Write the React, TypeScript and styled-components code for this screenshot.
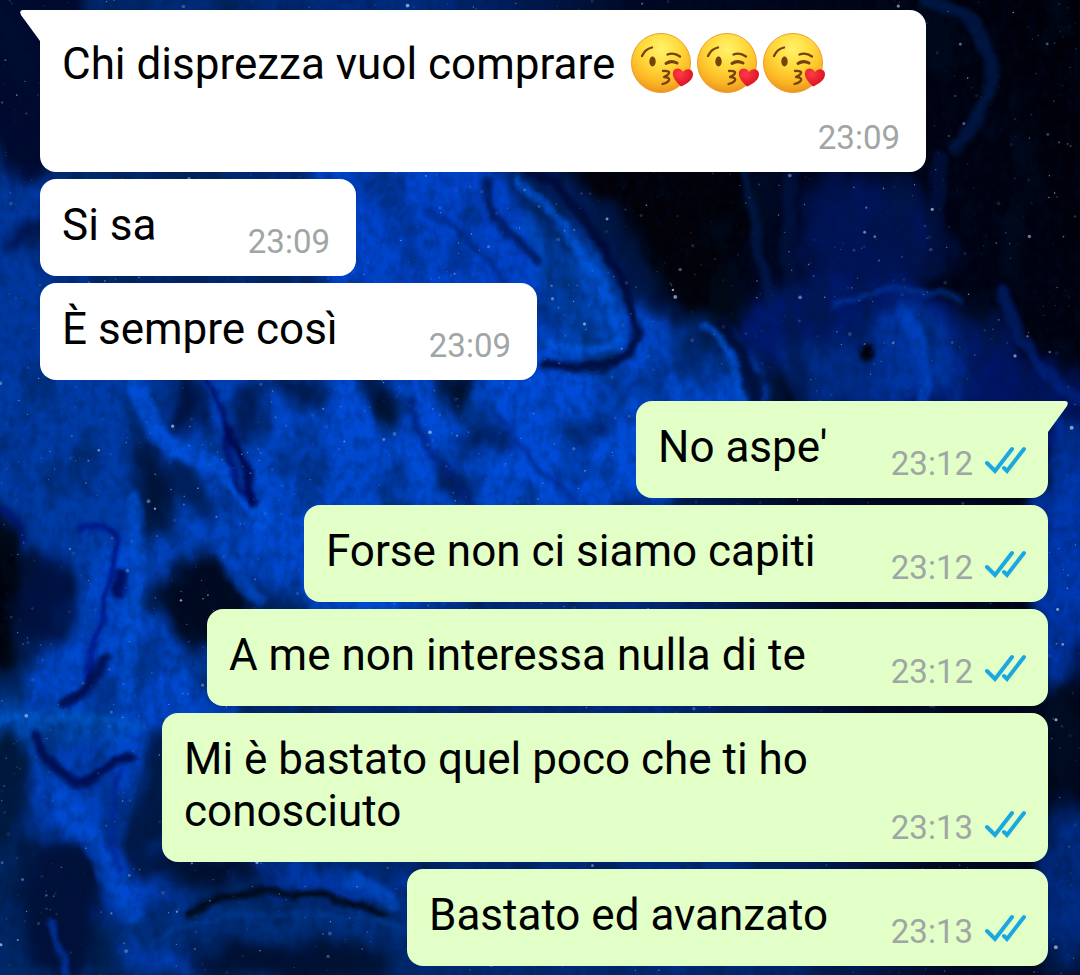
import React from "react";
import styled, { createGlobalStyle } from "styled-components";

const GlobalStyle = createGlobalStyle`
  *, *::before, *::after { box-sizing: border-box; }
  html { background: #00103c; }
  body { margin: 0; font-family: Roboto, "Noto Sans", sans-serif; color: #000; }
`;

const Wallpaper = styled.svg`
  position: fixed;
  inset: 0;
  width: 100%;
  height: 100%;
  z-index: -1;
`;

const Chat = styled.main`
  display: flex;
  flex-direction: column;
  gap: 21px;
  padding: 10px 32px 9px 40px;
`;

const Group = styled.section<{ $mine?: boolean }>`
  display: flex;
  flex-direction: column;
  align-items: ${(p) => (p.$mine ? "flex-end" : "flex-start")};
  gap: 7px;
`;

const Bubble = styled.article<{ $mine?: boolean; $width: number; $stacked?: boolean; $tail?: boolean }>`
  position: relative;
  display: flex;
  flex-direction: ${(p) => (p.$stacked ? "column" : "row")};
  justify-content: space-between;
  align-items: flex-end;
  width: ${(p) => p.$width}px;
  max-width: 100%;
  min-height: ${(p) => (p.$stacked ? 162 : 97)}px;
  padding: ${(p) => (p.$stacked ? 22 : 20)}px ${(p) => (p.$mine ? 22 : 26)}px 18px 22px;
  border-radius: 16px;
  border-top-left-radius: ${(p) => (p.$tail && !p.$mine ? 0 : 16)}px;
  border-top-right-radius: ${(p) => (p.$tail && p.$mine ? 0 : 16)}px;
  background: ${(p) => (p.$mine ? "#e1ffc7" : "#fff")};
`;

const Tail = styled.svg<{ $mine?: boolean }>`
  position: absolute;
  top: 0;
  ${(p) => (p.$mine ? "left: 100%; transform: scaleX(-1);" : "right: 100%;")}
  width: 20px;
  height: 32px;
  fill: ${(p) => (p.$mine ? "#e1ffc7" : "#fff")};
`;

const Text = styled.p<{ $stacked?: boolean }>`
  flex: 0 1 auto;
  align-self: ${(p) => (p.$stacked ? "stretch" : "flex-end")};
  margin: 0;
  padding-bottom: 7px;
  font-size: 44px;
  line-height: 52px;
`;

const Meta = styled.footer`
  display: flex;
  flex: none;
  gap: 11px;
  color: #a0a5a5;
  font-size: 33px;
  line-height: 32px;
`;

const Ticks = styled.svg`
  width: 42px;
  height: 32px;
  overflow: visible;
  fill: none;
  stroke: #1ba8e0;
  stroke-width: 4;
  stroke-linecap: round;
`;

const EmojiRun = styled.span`
  margin-left: 4px;
`;

const Emoji = styled.svg`
  width: 66px;
  height: 62px;
  vertical-align: -15px;
`;

function Kiss() {
  return (
    <Emoji viewBox="0 0 66 62" role="img" aria-label="😘">
      <defs>
        <radialGradient id="face" cx="50%" cy="26%" r="74%">
          <stop offset="0" stopColor="#fff36b" />
          <stop offset="0.45" stopColor="#ffd83a" />
          <stop offset="0.8" stopColor="#fbb423" />
          <stop offset="1" stopColor="#ea9420" />
        </radialGradient>
        <radialGradient id="heart" cx="35%" cy="30%" r="75%">
          <stop offset="0" stopColor="#ff3c46" />
          <stop offset="1" stopColor="#d80d20" />
        </radialGradient>
      </defs>
      <circle cx="31" cy="31" r="29.500" fill="url(#face)" stroke="#e9a02c" />
      <g fill="none" stroke="#75420d" strokeWidth="2.3" strokeLinecap="round" strokeLinejoin="round">
        <path d="M12 24 Q15 17 22 15.500" />
        <path d="M37.500 22.500 Q44 20 50 24.500" />
        <path d="M36 31.500 Q41 28 47 31" strokeWidth="3" />
        <path d="M33 39 Q41 38.500 38.500 42 Q37 44 34 45 Q41 45.500 38.500 49 Q37 51 32.500 52" />
      </g>
      <ellipse cx="22.500" cy="29.500" rx="3.2" ry="5" fill="#75420d" />
      <path d="M51 54.500 C46 50 42 45 43 40 C45 35 51 36 53 40 C56 35.500 63 37 63 42 C63 48 57 52 51 54.500Z" fill="url(#heart)" />
    </Emoji>
  );
}

type Blob = [number, number, number, number, number, string, number];

const blobs: Blob[] = [
  [20, 290, 60, 130, 0, "#0038a0", 1],
  [120, 460, 200, 110, 0, "#003ca8", 1],
  [330, 490, 190, 120, 20, "#0048cc", 1],
  [420, 240, 130, 100, 30, "#0044cc", 1],
  [520, 420, 190, 90, 10, "#004cd8", 1],
  [575, 290, 36, 90, -25, "#0048bc", 1],
  [690, 375, 90, 48, 35, "#0048cc", 1],
  [870, 235, 80, 60, 10, "#001458", 1],
  [880, 350, 150, 66, 10, "#00196c", 1],
  [910, 360, 50, 50, 10, "#0034a0", 1],
  [830, 370, 50, 36, 0, "#002c88", 1],
  [1040, 400, 60, 50, 30, "#001464", 1],
  [1066, 570, 30, 150, 0, "#0038b0", 1],
  [1066, 740, 24, 60, 0, "#000c20", 1],
  [1066, 890, 30, 80, 0, "#002c84", 1],
  [130, 690, 100, 150, 12, "#0048cc", 1],
  [30, 724, 90, 24, 0, "#004cb8", 1],
  [80, 805, 60, 60, -20, "#0044c4", 1],
  [146, 900, 50, 80, -25, "#0040bc", 1],
  [330, 880, 100, 18, 10, "#0038a8", 1],
  [250, 930, 180, 20, 0, "#003080", 1],
  [650, 160, 130, 60, 35, "#020208", 1],
  [685, 240, 46, 90, -30, "#020208", 1],
  [700, 345, 20, 30, -20, "#002058", 0.8],
  [30, 60, 60, 110, 0, "#000a30", 1],
  [24, 236, 22, 9, -8, "#000a38", 0.9],
  [185, 408, 18, 30, -15, "#000c30", 0.9],
  [246, 412, 14, 34, -15, "#001038", 0.8],
  [292, 392, 24, 16, 0, "#001848", 0.9],
  [384, 396, 16, 26, -20, "#00081c", 0.9],
  [456, 388, 20, 22, -30, "#00081c", 0.9],
  [484, 434, 22, 12, 0, "#001c54", 0.9],
  [600, 430, 20, 10, 0, "#001c54", 0.9],
  [458, 476, 18, 24, 30, "#00143c", 0.8],
  [155, 490, 16, 66, -8, "#00102c", 0.9],
  [190, 490, 24, 30, -35, "#001844", 0.8],
  [555, 220, 12, 50, -18, "#002460", 0.8],
  [205, 605, 52, 44, 20, "#000a20", 1],
  [2, 590, 24, 86, 0, "#00040c", 1],
  [46, 600, 24, 52, 0, "#000c38", 0.8],
  [6, 790, 24, 60, 0, "#00183c", 0.9],
  [58, 905, 42, 70, -10, "#001036", 0.9],
  [152, 800, 20, 70, 8, "#001438", 0.9],
  [205, 872, 60, 16, 5, "#000c28", 0.9],
  [290, 958, 110, 20, 6, "#000e2c", 0.9],
];

const strokes: [string, string, number, number][] = [
  ["M528 170 Q570 190 598 240 Q636 300 637 340 Q630 372 544 366", "#000a38", 9, 0.9],
  ["M518 180 Q562 220 586 260 Q618 310 620 342 Q600 354 545 348", "#0058e0", 9, 0.8],
  ["M484 180 Q484 224 540 260", "#001858", 10, 0.8],
  ["M430 212 Q480 240 500 280", "#002880", 7, 0.7],
  ["M720 325 Q752 360 758 402", "#000c34", 12, 0.9],
  ["M705 325 Q738 360 744 402", "#0052d8", 9, 0.8],
  ["M745 170 Q755 230 770 300", "#00205c", 10, 0.6],
  ["M790 170 Q784 260 800 400", "#00184c", 14, 0.6],
  ["M835 305 Q890 278 960 300", "#0038a0", 6, 0.7],
  ["M905 310 Q930 350 920 405", "#0044c4", 14, 0.8],
  ["M867 348 L867 354", "#00020c", 14, 1],
  ["M925 0 Q990 14 994 76 Q984 120 955 148", "#001a4c", 12, 0.8],
  ["M940 160 L934 270", "#001040", 16, 0.8],
  ["M1000 290 Q1030 370 1080 400", "#00288c", 12, 0.6],
  ["M137 375 Q140 440 190 455 Q240 470 262 520", "#0054e4", 18, 0.8],
  ["M208 382 Q224 400 226 438 Q235 490 256 500", "#00106c", 6, 0.9],
  ["M228 430 Q246 460 254 500", "#000a50", 8, 1],
  ["M408 400 Q436 470 480 512", "#002080", 6, 0.8],
  ["M500 420 Q540 480 590 510", "#00309c", 6, 0.8],
  ["M134 500 Q140 580 124 700", "#0052dc", 16, 0.7],
  ["M80 530 Q112 520 118 540 Q110 590 92 650 Q90 690 70 706", "#00188c", 6, 1],
  ["M122 575 L120 590", "#000a58", 12, 0.9],
  ["M104 660 Q88 692 64 702", "#001050", 11, 0.9],
  ["M0 720 Q60 712 140 728", "#0058cc", 8, 0.7],
  ["M36 735 Q54 780 86 784 Q110 766 132 756", "#001058", 10, 1],
  ["M60 800 Q100 850 130 910", "#0050dc", 22, 0.6],
  ["M125 770 Q100 830 120 870", "#00249c", 5, 0.8],
  ["M190 912 Q230 884 320 896 Q360 902 380 914", "#000814", 8, 0.9],
  ["M145 950 Q190 912 270 912 Q350 914 410 930", "#003c98", 6, 0.6],
  ["M350 880 Q380 888 392 902", "#004cc8", 16, 0.8],
  ["M48 920 Q60 950 68 975", "#0038b0", 8, 0.8],
  ["M220 520 Q226 570 260 600", "#004cd0", 14, 0.7],
  ["M0 508 Q16 514 22 540", "#001474", 6, 0.8],
];

function makeStars() {
  let seed = 41;
  const next = () => {
    seed = (seed * 16807) % 2147483647;
    return seed / 2147483647;
  };
  return Array.from({ length: 2600 }, () => ({
    x: next() * 1080,
    y: next() * 975,
    r: 0.6 + next() ** 5 * 1.4,
    o: 0.1 + next() ** 3 * 0.75,
  }));
}

const stars = makeStars();

function Background() {
  return (
    <Wallpaper viewBox="0 0 1080 975" preserveAspectRatio="xMidYMid slice" aria-hidden="true">
      <defs>
        <linearGradient id="base" x1="0" y1="0.3" x2="1" y2="0">
          <stop offset="0" stopColor="#002868" />
          <stop offset="0.45" stopColor="#002c80" />
          <stop offset="0.62" stopColor="#000824" />
          <stop offset="1" stopColor="#000006" />
        </linearGradient>
        <filter id="flow" x="-10%" y="-10%" width="120%" height="120%" colorInterpolationFilters="sRGB">
          <feGaussianBlur stdDeviation="8" result="soft" />
          <feTurbulence type="fractalNoise" baseFrequency="0.02 0.012" numOctaves="3" seed="7" result="noise" />
          <feDisplacementMap in="soft" in2="noise" scale="50" xChannelSelector="R" yChannelSelector="G" />
        </filter>
        <filter id="ink" x="-10%" y="-10%" width="120%" height="120%" colorInterpolationFilters="sRGB">
          <feGaussianBlur stdDeviation="2" result="soft" />
          <feTurbulence type="fractalNoise" baseFrequency="0.03" numOctaves="3" seed="3" result="noise" />
          <feDisplacementMap in="soft" in2="noise" scale="14" xChannelSelector="R" yChannelSelector="G" />
        </filter>
        <filter id="mottle" x="0" y="0" width="100%" height="100%" colorInterpolationFilters="sRGB">
          <feTurbulence type="fractalNoise" baseFrequency="0.024 0.014" numOctaves="4" seed="12" />
          <feColorMatrix values="0 0 0 0 0  0 0 0 0 0.09  0 0 0 0 0.2  4 0 0 0 -1.9" />
        </filter>
        <filter id="grain" x="0" y="0" width="100%" height="100%" colorInterpolationFilters="sRGB">
          <feTurbulence type="fractalNoise" baseFrequency="0.11 0.08" numOctaves="3" seed="5" />
          <feColorMatrix values="0 0 0 0 0  0 0 0 0 0.08  0 0 0 0 0.2  0 2 0 0 -0.8" />
        </filter>
      </defs>
      <rect width="1080" height="975" fill="url(#base)" />
      <g filter="url(#flow)">
        {blobs.map(([x, y, rx, ry, a, fill, o], i) => (
          <ellipse key={i} cx={x} cy={y} rx={rx} ry={ry} fill={fill} opacity={o} transform={`rotate(${a} ${x} ${y})`} />
        ))}
      </g>
      <rect width="1080" height="975" filter="url(#mottle)" opacity="0.35" />
      <g filter="url(#ink)" fill="none" strokeLinecap="round">
        {strokes.map(([d, stroke, w, o], i) => (
          <path key={i} d={d} stroke={stroke} strokeWidth={w} opacity={o} />
        ))}
      </g>
      <rect width="1080" height="975" filter="url(#grain)" opacity="0.3" />
      <g fill="#a9bfdc">
        {stars.map((s, i) => (
          <circle key={i} cx={s.x} cy={s.y} r={s.r} opacity={s.o} />
        ))}
      </g>
    </Wallpaper>
  );
}

type MessageProps = {
  time: string;
  width: number;
  mine?: boolean;
  tail?: boolean;
  stacked?: boolean;
  children: React.ReactNode;
};

function Message({ time, width, mine, tail, stacked, children }: MessageProps) {
  return (
    <Bubble $mine={mine} $width={width} $stacked={stacked} $tail={tail}>
      {tail && (
        <Tail $mine={mine} viewBox="0 0 20 32" aria-hidden="true">
          <path d="M20 0H3Q-1 0 1 5L20 31Z" />
        </Tail>
      )}
      <Text $stacked={stacked}>{children}</Text>
      <Meta>
        <time>{time}</time>
        {mine && (
          <Ticks viewBox="0 0 42 32" role="img" aria-label="Letto">
            <path d="M3 15L11 23L28 1M20 20L23 23L40 1" />
          </Ticks>
        )}
      </Meta>
    </Bubble>
  );
}

export default function App() {
  return (
    <>
      <GlobalStyle />
      <Background />
      <Chat>
        <Group>
          <Message time="23:09" width={886} tail stacked>
            Chi disprezza vuol comprare <EmojiRun><Kiss /><Kiss /><Kiss /></EmojiRun>
          </Message>
          <Message time="23:09" width={316}>Si sa</Message>
          <Message time="23:09" width={497}>È sempre così</Message>
        </Group>
        <Group $mine>
          <Message time="23:12" width={412} mine tail>No aspe'</Message>
          <Message time="23:12" width={744} mine>Forse non ci siamo capiti</Message>
          <Message time="23:12" width={841} mine>A me non interessa nulla di te</Message>
          <Message time="23:13" width={886} mine>Mi è bastato quel poco che ti ho conosciuto</Message>
          <Message time="23:13" width={641} mine>Bastato ed avanzato</Message>
        </Group>
      </Chat>
    </>
  );
}
